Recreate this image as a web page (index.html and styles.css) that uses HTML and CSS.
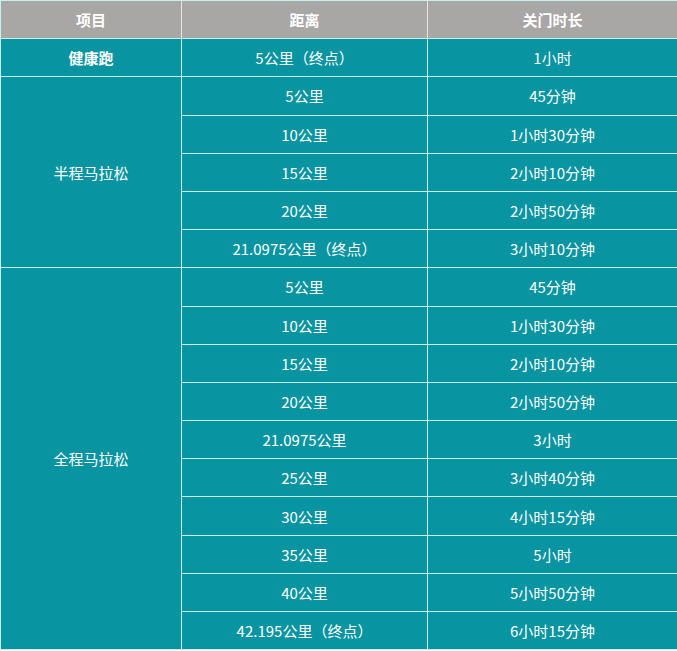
FILE: index.html
```html
<!DOCTYPE html>
<html>
<head>
<meta charset="utf-8">
<link rel="stylesheet" href="styles.css">
</head>
<body>
<table class="tbl">
<colgroup><col class="c1"><col class="c2"><col class="c3"></colgroup>
<thead>
<tr><th>项目</th><th>距离</th><th>关门时长</th></tr>
</thead>
<tbody>
<tr><td class="bold">健康跑</td><td>5公里（终点）</td><td>1小时</td></tr>
<tr><td rowspan="5">半程马拉松</td><td>5公里</td><td>45分钟</td></tr>
<tr><td>10公里</td><td>1小时30分钟</td></tr>
<tr><td>15公里</td><td>2小时10分钟</td></tr>
<tr><td>20公里</td><td>2小时50分钟</td></tr>
<tr><td>21.0975公里（终点）</td><td>3小时10分钟</td></tr>
<tr><td rowspan="10">全程马拉松</td><td>5公里</td><td>45分钟</td></tr>
<tr><td>10公里</td><td>1小时30分钟</td></tr>
<tr><td>15公里</td><td>2小时10分钟</td></tr>
<tr><td>20公里</td><td>2小时50分钟</td></tr>
<tr><td>21.0975公里</td><td>3小时</td></tr>
<tr><td>25公里</td><td>3小时40分钟</td></tr>
<tr><td>30公里</td><td>4小时15分钟</td></tr>
<tr><td>35公里</td><td>5小时</td></tr>
<tr><td>40公里</td><td>5小时50分钟</td></tr>
<tr><td>42.195公里（终点）</td><td>6小时15分钟</td></tr>
</tbody>
</table>
</body>
</html>
```
FILE: styles.css
```css
html, body {
  margin: 0;
  padding: 0;
  background: #ffffff;
}
.tbl {
  border-collapse: collapse;
  width: 677px;
  table-layout: fixed;
  font-family: "Microsoft YaHei", "Noto Sans CJK SC", "Noto Sans", sans-serif;
  font-size: 15px;
  color: #ffffff;
  background: #0894a1;
}
.c1 { width: 181px; }
.c2 { width: 246px; }
.c3 { width: 250px; }
.tbl th, .tbl td {
  border: 1px solid #c9eef0;
  text-align: center;
  vertical-align: middle;
  height: 38.2px;
  padding: 0;
  box-sizing: border-box;
}
.tbl th {
  background: #a9a6a6;
  font-weight: bold;
  border-left-color: #e6e6e6;
  border-right-color: #e6e6e6;
}
.tbl th:first-child { border-left-color: #c9eef0; }
.tbl th:last-child { border-right-color: #c9eef0; }
.tbl td.bold { font-weight: bold; }
```
